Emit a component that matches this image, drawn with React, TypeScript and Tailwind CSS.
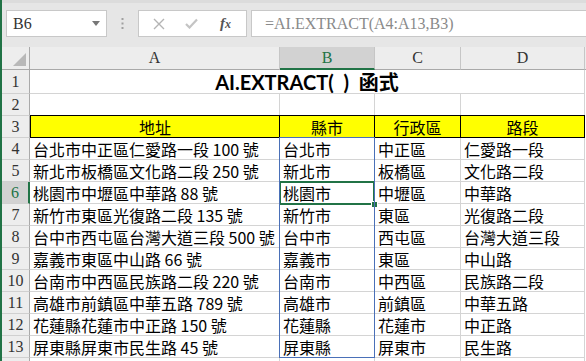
import React from "react";

const rows: [string, string, string, string][] = [
  ["台北市中正區仁愛路一段 100 號", "台北市", "中正區", "仁愛路一段"],
  ["新北市板橋區文化路二段 250 號", "新北市", "板橋區", "文化路二段"],
  ["桃園市中壢區中華路 88 號", "桃園市", "中壢區", "中華路"],
  ["新竹市東區光復路二段 135 號", "新竹市", "東區", "光復路二段"],
  ["台中市西屯區台灣大道三段 500 號", "台中市", "西屯區", "台灣大道三段"],
  ["嘉義市東區中山路 66 號", "嘉義市", "東區", "中山路"],
  ["台南市中西區民族路二段 220 號", "台南市", "中西區", "民族路二段"],
  ["高雄市前鎮區中華五路 789 號", "高雄市", "前鎮區", "中華五路"],
  ["花蓮縣花蓮市中正路 150 號", "花蓮縣", "花蓮市", "中正路"],
  ["屏東縣屏東市民生路 45 號", "屏東縣", "屏東市", "民生路"],
];

const cjk = "font-['Noto_Sans_CJK_TC','Noto_Sans_CJK_SC',sans-serif]";
const hdrFont = "font-['Liberation_Serif',serif]";

function RowHead({ n, h, active }: { n: string; h: string; active?: boolean }) {
  return (
    <div
      className={`w-[28px] shrink-0 ${h} flex items-center justify-center border-b border-[#d0d0d0] ${hdrFont} text-[16px] leading-none ${
        active
          ? "bg-[#d2d2d2] text-[#217346] border-r-2 border-r-[#217346]"
          : "bg-[#ededed] text-[#333] border-r border-r-[#a9a9a9]"
      }`}
    >
      {n}
    </div>
  );
}

export default function App() {
  return (
    <div className="w-[586px] h-[361px] overflow-hidden flex bg-white">
      <div className="w-[2px] shrink-0 bg-[#217346]" />
      <div className="flex-1 flex flex-col min-w-0">
        {/* formula bar */}
        <div className="h-[47px] shrink-0 bg-[#e6e6e6] border-t-[3px] border-t-[#dcdcdc] pt-[7px] flex items-start">
          <div className="ml-[4px] w-[101px] h-[27px] bg-white border border-[#c8c8c8] flex items-center justify-between pl-[6px] pr-[6px]">
            <span className="font-['Liberation_Serif',serif] text-[16px] text-[#333]">B6</span>
            <svg width="8" height="5" viewBox="0 0 8 5">
              <path d="M0 0 L8 0 L4 5 Z" fill="#777" />
            </svg>
          </div>
          <div className="w-[31px] h-[27px] flex items-center justify-center">
            <svg width="3" height="11" viewBox="0 0 3 11">
              <rect x="0.5" y="0" width="2" height="2" fill="#a0a0a0" />
              <rect x="0.5" y="4.5" width="2" height="2" fill="#a0a0a0" />
              <rect x="0.5" y="9" width="2" height="2" fill="#a0a0a0" />
            </svg>
          </div>
          <div className="w-[109px] h-[27px] bg-white border border-[#c8c8c8] flex items-center pl-[14px]">
            <svg width="12" height="12" viewBox="0 0 12 12">
              <path d="M1 1 L11 11 M11 1 L1 11" stroke="#b4b4b4" strokeWidth="1.4" />
            </svg>
            <svg className="ml-[20px]" width="13" height="11" viewBox="0 0 13 11">
              <path d="M1 6 L4.5 9.5 L12 1.5" stroke="#c4c4c4" strokeWidth="2.2" fill="none" />
            </svg>
            <span className="ml-[22px] font-['Liberation_Serif',serif] italic font-bold text-[15px] text-[#555] leading-none">
              f<span className="text-[12px]">x</span>
            </span>
          </div>
          <div className="ml-[4px] flex-1 h-[27px] bg-white border border-r-0 border-[#c8c8c8] flex items-center pl-[13px]">
            <span className="font-['Liberation_Serif',serif] text-[16px] text-[#8a8a8a]">=AI.EXTRACT(A4:A13,B3)</span>
          </div>
        </div>

        {/* column headers */}
        <div className="h-[23px] shrink-0 flex bg-[#e6e6e6]">
          <div className="w-[28px] shrink-0 h-full bg-[#ededed] border-r border-b border-[#a9a9a9] relative">
            <svg className="absolute right-[3px] bottom-[3px]" width="13" height="13" viewBox="0 0 13 13">
              <path d="M13 0 L13 13 L0 13 Z" fill="#b8b8b8" />
            </svg>
          </div>
          {[
            ["A", "w-[250px]", false],
            ["B", "w-[95px]", true],
            ["C", "w-[86px]", false],
            ["D", "w-[124px]", false],
          ].map(([l, w, a]) => (
            <div
              key={l as string}
              className={`${w} shrink-0 h-full flex items-center justify-center border-r border-[#c6c6c6] ${hdrFont} text-[16px] ${
                a
                  ? "bg-[#d2d2d2] text-[#217346] border-b-2 border-b-[#217346]"
                  : "bg-[#ededed] text-[#333] border-b border-b-[#a9a9a9]"
              }`}
            >
              {l as string}
            </div>
          ))}
          <div className="flex-1 bg-[#ededed] border-b border-[#a9a9a9]" />
        </div>

        {/* grid */}
        <div className="relative flex-1">
          {/* row 1 */}
          <div className="flex h-[24px]">
            <RowHead n="1" h="h-[24px]" />
            <div className="w-[555px] shrink-0 border-b border-r border-[#d4d4d4] flex items-center justify-center">
              <span className="font-['Lato','Noto_Sans_CJK_TC',sans-serif] font-bold text-[20px] text-black leading-none [word-spacing:5px]">
                AI.EXTRACT( ) 函式
              </span>
            </div>
          </div>
          {/* row 2 */}
          <div className="flex h-[22px]">
            <RowHead n="2" h="h-[22px]" />
            <div className="w-[250px] shrink-0 border-b border-r border-[#d4d4d4]" />
            <div className="w-[95px] shrink-0 border-b border-r border-[#d4d4d4]" />
            <div className="w-[86px] shrink-0 border-b border-r border-[#d4d4d4]" />
            <div className="w-[124px] shrink-0 border-b border-r border-[#d4d4d4]" />
          </div>
          {/* row 3 */}
          <div className="flex h-[22px]">
            <RowHead n="3" h="h-[22px]" />
            {[
              ["地址", "w-[250px] border-l"],
              ["縣市", "w-[95px]"],
              ["行政區", "w-[86px]"],
              ["路段", "w-[124px]"],
            ].map(([t, w]) => (
              <div
                key={t}
                className={`${w} shrink-0 -mt-px h-[23px] bg-[#ffff00] border-t border-b border-r border-black flex items-center justify-center ${cjk} text-[16px] text-black`}
              >
                {t}
              </div>
            ))}
          </div>
          {/* data rows */}
          {rows.map((r, i) => (
            <div key={i} className="flex h-[22px]">
              <RowHead n={String(i + 4)} h="h-[22px]" active={i === 2} />
              <div className={`w-[250px] shrink-0 border-b border-r border-[#d4d4d4] flex items-center pl-[3px] ${cjk} text-[16px] text-black whitespace-nowrap`}>
                {r[0]}
              </div>
              <div className={`w-[95px] shrink-0 border-b border-r border-[#d4d4d4] flex items-center pl-[3px] ${cjk} text-[16px] text-black relative`}>
                {r[1]}
                {i === 2 && (
                  <div className="absolute left-[-1px] top-[-1px] w-[96px] h-[24px] border-2 border-[#217346]">
                    <div className="absolute right-[-5px] bottom-[-5px] w-[7px] h-[7px] bg-[#217346] border border-white" />
                  </div>
                )}
              </div>
              <div className={`w-[86px] shrink-0 border-b border-r border-[#d4d4d4] flex items-center pl-[3px] ${cjk} text-[16px] text-black`}>
                {r[2]}
              </div>
              <div className={`w-[124px] shrink-0 border-b border-r border-[#d4d4d4] flex items-center pl-[3px] ${cjk} text-[16px] text-black`}>
                {r[3]}
              </div>
            </div>
          ))}
          {/* row 14 (only its top edge is visible) */}
          <div className="flex h-[22px]">
            <RowHead n="" h="h-[22px]" />
            <div className="w-[250px] shrink-0 border-r border-[#d4d4d4]" />
            <div className="w-[95px] shrink-0 border-r border-[#d4d4d4]" />
            <div className="w-[86px] shrink-0 border-r border-[#d4d4d4]" />
            <div className="w-[124px] shrink-0 border-r border-[#d4d4d4]" />
          </div>
          {/* spill range highlight B4:B13 */}
          <div className="absolute left-[277px] top-[67px] w-[96px] h-[221px] border border-[#4a70b8] pointer-events-none" />
        </div>
      </div>
    </div>
  );
}
